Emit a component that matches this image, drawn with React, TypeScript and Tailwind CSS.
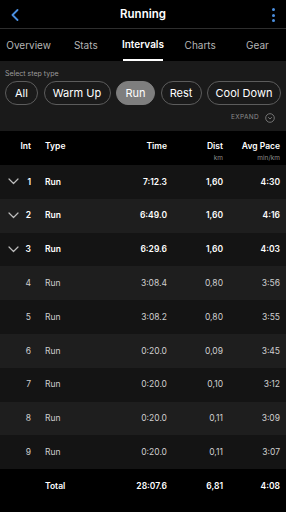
import React from "react";

const rows = [
  { n: "1", t: "7:12.3", d: "1,60", p: "4:30", main: true },
  { n: "2", t: "6:49.0", d: "1,60", p: "4:16", main: true },
  { n: "3", t: "6:29.6", d: "1,60", p: "4:03", main: true },
  { n: "4", t: "3:08.4", d: "0,80", p: "3:56", main: false },
  { n: "5", t: "3:08.2", d: "0,80", p: "3:55", main: false },
  { n: "6", t: "0:20.0", d: "0,09", p: "3:45", main: false },
  { n: "7", t: "0:20.0", d: "0,10", p: "3:12", main: false },
  { n: "8", t: "0:20.0", d: "0,11", p: "3:09", main: false },
  { n: "9", t: "0:20.0", d: "0,11", p: "3:07", main: false },
];

function Chevron() {
  return (
    <svg width="11" height="7" viewBox="0 0 11 7" className="mr-auto ml-[8px]">
      <path d="M1 1 L5.5 5.5 L10 1" stroke="#bdbdbd" strokeWidth="1.2" fill="none" strokeLinecap="round" strokeLinejoin="round" />
    </svg>
  );
}

export default function App() {
  const font = { fontFamily: "Inter, 'Liberation Sans', sans-serif" };
  return (
    <div className="w-[286px] h-[512px] bg-black text-white overflow-hidden" style={font}>
      {/* Header */}
      <div className="h-[29px] flex items-center relative border-b border-[#2e2e2e] pt-[2px]">
        <div className="w-[30px] pl-[11px] flex items-center">
          <svg width="8" height="12" viewBox="0 0 8 12">
            <path d="M6.5 1 L1.5 6 L6.5 11" stroke="#4b8fe0" strokeWidth="1.8" fill="none" strokeLinecap="round" strokeLinejoin="round" />
          </svg>
        </div>
        <div className="flex-1 text-center text-[11.5px] font-semibold">Running</div>
        <div className="w-[30px] flex flex-col items-center gap-[2.5px] pl-[5px]">
          <div className="w-[3px] h-[3px] rounded-full bg-[#4b8fe0]" />
          <div className="w-[3px] h-[3px] rounded-full bg-[#4b8fe0]" />
          <div className="w-[3px] h-[3px] rounded-full bg-[#4b8fe0]" />
        </div>
      </div>
      {/* Tabs */}
      <div className="grid grid-cols-5 h-[32px] text-[10px] text-[#b5b5b5]">
        <div className="flex items-center justify-center">Overview</div>
        <div className="flex items-center justify-center">Stats</div>
        <div className="flex flex-col items-center justify-end">
          <div className="flex-1 flex items-center text-white font-semibold">Intervals</div>
          <div className="w-[40px] h-[2px] bg-white" />
        </div>
        <div className="flex items-center justify-center">Charts</div>
        <div className="flex items-center justify-center">Gear</div>
      </div>
      {/* Filter panel */}
      <div className="h-[70px] bg-[#1a1a1a] flex flex-col">
        <div className="text-[7px] text-[#9a9a9a] pl-[5px] pt-[8px] leading-[9px]">Select step type</div>
        <div className="flex gap-[5.5px] pl-[5px] mt-[3px] text-[11px] whitespace-nowrap">
          <div className="h-[24px] w-[33px] shrink-0 rounded-full border border-[#5c5c5c] flex items-center justify-center">All</div>
          <div className="h-[24px] w-[67px] shrink-0 rounded-full border border-[#5c5c5c] flex items-center justify-center">Warm Up</div>
          <div className="h-[24px] w-[39px] shrink-0 rounded-full bg-[#7e7e7e] border border-[#7e7e7e] flex items-center justify-center">Run</div>
          <div className="h-[24px] w-[41px] shrink-0 rounded-full border border-[#5c5c5c] flex items-center justify-center">Rest</div>
          <div className="h-[24px] w-[74px] shrink-0 rounded-full border border-[#5c5c5c] flex items-center justify-center">Cool Down</div>
        </div>
        <div className="flex items-center justify-end pr-[11px] mt-[8px] gap-[6px]">
          <span className="text-[6.5px] text-[#8a8a8a] tracking-[0.3px]">EXPAND</span>
          <svg width="10" height="10" viewBox="0 0 10 10">
            <circle cx="5" cy="5" r="4.3" stroke="#8a8a8a" strokeWidth="0.8" fill="none" />
            <path d="M3.2 4.2 L5 6 L6.8 4.2" stroke="#8a8a8a" strokeWidth="0.8" fill="none" />
          </svg>
        </div>
      </div>
      {/* Table header */}
      <div className="h-[34px] flex items-start pt-[9px] text-[8.5px] font-semibold pr-[6px]">
        <div className="w-[31px] text-right">Int</div>
        <div className="flex-1 pl-[14px]">Type</div>
        <div className="w-[60px] text-right">Time</div>
        <div className="w-[56px] text-right flex flex-col items-end">
          <span>Dist</span>
          <span className="text-[6.5px] font-normal text-[#8a8a8a] mt-[1px]">km</span>
        </div>
        <div className="w-[57px] text-right flex flex-col items-end">
          <span>Avg Pace</span>
          <span className="text-[6.5px] font-normal text-[#8a8a8a] mt-[1px]">min/km</span>
        </div>
      </div>
      {/* Rows */}
      {rows.map((r, i) => (
        <div
          key={r.n}
          className={
            "h-[33.8px] flex items-center text-[8.5px] pr-[6px] " +
            (i % 2 === 0 ? "bg-[#141414] " : "bg-[#1e1e1e] ") +
            (r.main ? "font-semibold text-white" : "text-[#cfcfcf]")
          }
        >
          <div className="w-[31px] flex items-center justify-end">
            {r.main && <Chevron />}
            <span>{r.n}</span>
          </div>
          <div className="flex-1 pl-[14px]">Run</div>
          <div className="w-[60px] text-right">{r.t}</div>
          <div className="w-[56px] text-right">{r.d}</div>
          <div className="w-[57px] text-right">{r.p}</div>
        </div>
      ))}
      {/* Total */}
      <div className="h-[34px] flex items-center text-[8.5px] font-semibold pr-[6px]">
        <div className="w-[31px]" />
        <div className="flex-1 pl-[14px]">Total</div>
        <div className="w-[60px] text-right">28:07.6</div>
        <div className="w-[56px] text-right">6,81</div>
        <div className="w-[57px] text-right">4:08</div>
      </div>
    </div>
  );
}
